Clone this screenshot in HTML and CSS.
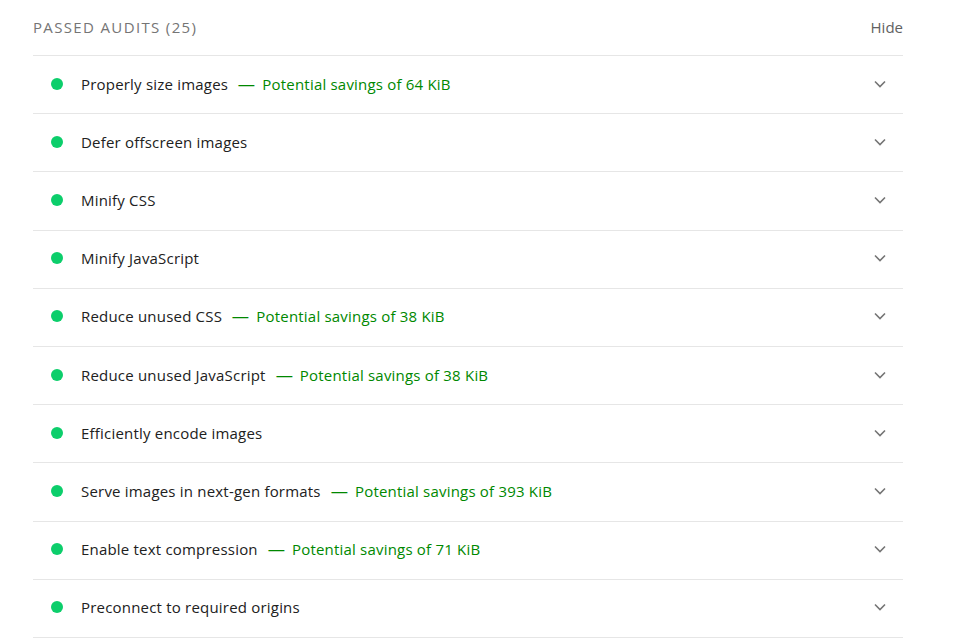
FILE: index.html
```html
<!DOCTYPE html>
<html>
<head>
<meta charset="utf-8">
<link rel="stylesheet" href="styles.css">
</head>
<body>
<div class="group">
  <div class="group-header">
    <span class="group-title">Passed audits <span class="count">(25)</span></span>
    <span class="toggle">Hide</span>
  </div>
  <div class="audit"><span class="dot"></span><span class="title">Properly size images</span><span class="savings"><span class="dash">—</span>Potential savings of 64 KiB</span><svg class="chev" viewBox="0 0 12 8"><path d="M1 1.5 L6 6.5 L11 1.5" /></svg></div>
  <div class="audit"><span class="dot"></span><span class="title">Defer offscreen images</span><svg class="chev" viewBox="0 0 12 8"><path d="M1 1.5 L6 6.5 L11 1.5" /></svg></div>
  <div class="audit"><span class="dot"></span><span class="title">Minify CSS</span><svg class="chev" viewBox="0 0 12 8"><path d="M1 1.5 L6 6.5 L11 1.5" /></svg></div>
  <div class="audit"><span class="dot"></span><span class="title">Minify JavaScript</span><svg class="chev" viewBox="0 0 12 8"><path d="M1 1.5 L6 6.5 L11 1.5" /></svg></div>
  <div class="audit"><span class="dot"></span><span class="title">Reduce unused CSS</span><span class="savings"><span class="dash">—</span>Potential savings of 38 KiB</span><svg class="chev" viewBox="0 0 12 8"><path d="M1 1.5 L6 6.5 L11 1.5" /></svg></div>
  <div class="audit"><span class="dot"></span><span class="title">Reduce unused JavaScript</span><span class="savings"><span class="dash">—</span>Potential savings of 38 KiB</span><svg class="chev" viewBox="0 0 12 8"><path d="M1 1.5 L6 6.5 L11 1.5" /></svg></div>
  <div class="audit"><span class="dot"></span><span class="title">Efficiently encode images</span><svg class="chev" viewBox="0 0 12 8"><path d="M1 1.5 L6 6.5 L11 1.5" /></svg></div>
  <div class="audit"><span class="dot"></span><span class="title">Serve images in next-gen formats</span><span class="savings"><span class="dash">—</span>Potential savings of 393 KiB</span><svg class="chev" viewBox="0 0 12 8"><path d="M1 1.5 L6 6.5 L11 1.5" /></svg></div>
  <div class="audit"><span class="dot"></span><span class="title">Enable text compression</span><span class="savings"><span class="dash">—</span>Potential savings of 71 KiB</span><svg class="chev" viewBox="0 0 12 8"><path d="M1 1.5 L6 6.5 L11 1.5" /></svg></div>
  <div class="audit"><span class="dot"></span><span class="title">Preconnect to required origins</span><svg class="chev" viewBox="0 0 12 8"><path d="M1 1.5 L6 6.5 L11 1.5" /></svg></div>
</div>
</body>
</html>
```
FILE: styles.css
```css
html, body {
  margin: 0;
  padding: 0;
  background: #ffffff;
}
body {
  font-family: "Open Sans", "Noto Sans", sans-serif;
  color: #212121;
  padding: 0 65px 0 33px;
}
.group {
  width: 870px;
}
.group-header {
  display: flex;
  justify-content: space-between;
  align-items: center;
  height: 56px;
  padding-bottom: 1px;
  border-bottom: 1px solid #e6e6e6;
  box-sizing: border-box;
}
.group-title {
  text-transform: uppercase;
  color: #757575;
  font-size: 15px;
  letter-spacing: 1.35px;
}
.toggle {
  color: #616161;
  font-size: 15px;
}
.audit {
  display: flex;
  align-items: center;
  height: 58.2px;
  padding-bottom: 2px;
  box-sizing: border-box;
  border-bottom: 1px solid #e6e6e6;
  font-size: 15px;
}
.dot {
  width: 12px;
  height: 12px;
  border-radius: 50%;
  background: #0cce6b;
  margin-left: 18px;
  margin-right: 18px;
  flex: none;
}
.title {
  color: #212121;
  letter-spacing: 0.2px;
}
.savings {
  color: #008800;
  margin-left: 11px;
  letter-spacing: 0.2px;
}
.dash {
  margin-right: 8px;
  display: inline-block;
  transform: scaleX(1.15);
}
.chev {
  width: 12px;
  height: 8px;
  margin-left: auto;
  margin-right: 17px;
  fill: none;
  stroke: #757575;
  stroke-width: 1.6;
}
```
